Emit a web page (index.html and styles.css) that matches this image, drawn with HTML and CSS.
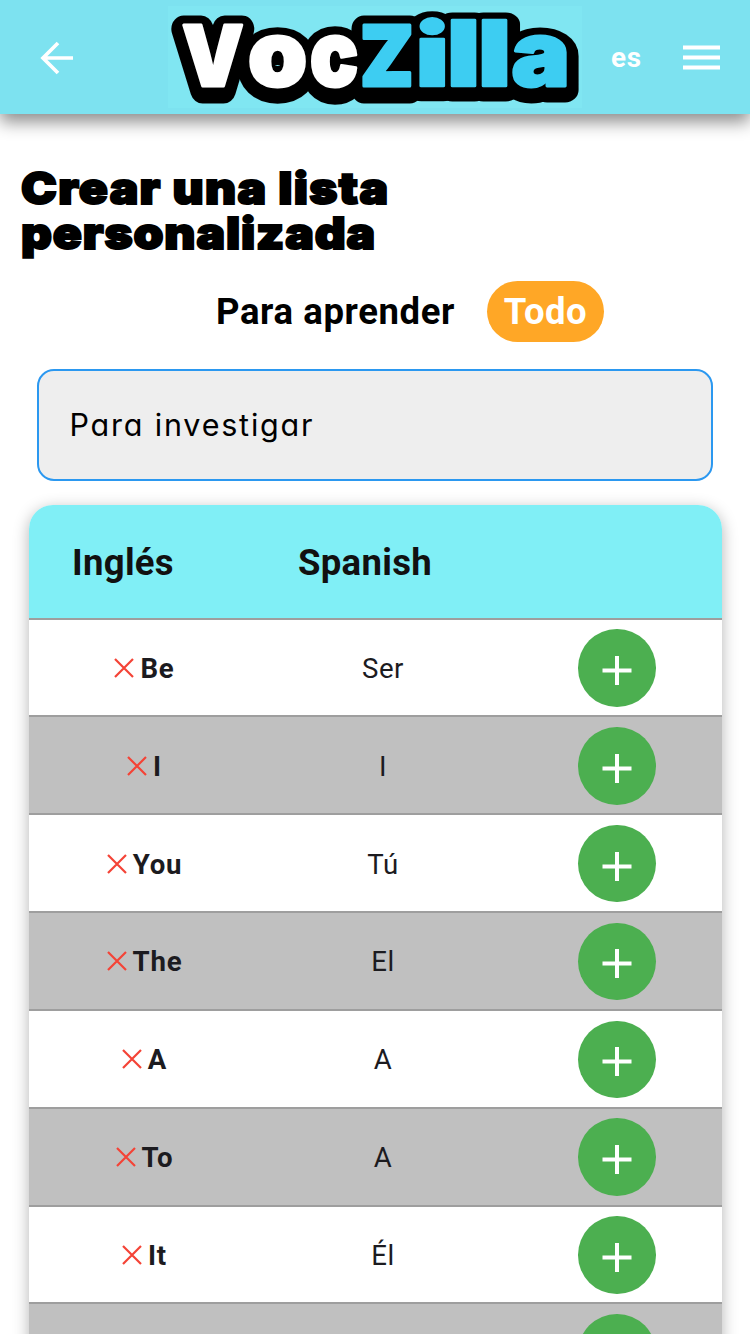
FILE: index.html
```html
<!DOCTYPE html>
<html lang="es">
<head>
<meta charset="utf-8">
<title>VocZilla</title>
<link rel="stylesheet" href="styles.css">
</head>
<body>
<header class="bar">
  <svg class="back" viewBox="0 0 34 34"><path d="M33 17H4M18 2L3 17L18 32"/></svg>
  <svg class="logo" viewBox="0 0 414 102" role="img" aria-label="VocZilla">
    <defs>
      <g id="voc" class="logo-text">
        <text transform="translate(14 80) scale(.9 .98)">V</text>
        <text transform="translate(80 80) scale(1.1 1.05)">o</text>
        <text transform="translate(142 80) scale(.93 1.05)">c</text>
      </g>
      <g id="zilla" class="logo-text">
        <text transform="translate(192 80) scale(.9 .98)">Z</text>
        <text transform="translate(247.500 80) scale(1.32 1.01)">i</text>
        <text transform="translate(278.700 80) scale(1.32 1.05)">l</text>
        <text transform="translate(309.700 80) scale(1.32 1.05)">l</text>
        <text transform="translate(343.500 80) scale(1.14 1.05)">a</text>
      </g>
    </defs>
    <g class="logo-edge">
      <use href="#voc" y="4"/><use href="#zilla" y="4"/>
    </g>
    <use class="logo-white" href="#voc"/>
    <use class="logo-blue" href="#zilla"/>
  </svg>
  <span class="lang">es</span>
  <svg class="menu" viewBox="0 0 37 26"><path d="M0 2.500H37M0 12.500H37M0 22.500H37"/></svg>
</header>
<main>
  <h1 class="title"><span class="line1">Crear una lista</span> <span class="line2">personalizada</span></h1>
  <div class="filter"><span class="filter-label">Para aprender</span><span class="pill">Todo</span></div>
  <div class="search">Para investigar</div>
  <section class="table">
    <div class="head"><span class="h-en">Inglés</span><span class="h-es">Spanish</span></div>
    <div class="rows" id="rows"></div>
  </section>
</main>
<script src="rows.js"></script>
</body>
</html>
```

FILE: rows.js
```js
const words = [['Be', 'Ser'], ['I', 'I'], ['You', 'Tú'], ['The', 'El'], ['A', 'A'], ['To', 'A'], ['It', 'Él'], ['', '']];
document.getElementById('rows').innerHTML = words.map(([en, es]) => `
  <div class="row">
    <div class="en">${en ? '<svg class="cross" viewBox="0 0 20 20"><path d="M1 1L19 19M19 1L1 19"/></svg>' : ''}<b>${en}</b></div>
    <div class="es">${es}</div>
    <div class="add"><svg viewBox="0 0 30 30"><path d="M15 0V29M0.500 14.500H29.500"/></svg></div>
  </div>`).join('');
```

FILE: styles.css
```css
* { box-sizing: border-box; }
body { margin: 0; width: 750px; height: 1334px; overflow: hidden; background: #fff; font-family: Roboto, sans-serif; color: #1c1b1f; }
svg { display: block; fill: none; flex: none; }
.bar { height: 114px; background: #7de2f0; display: flex; align-items: center; padding-left: 40px; box-shadow: 0 8px 16px rgba(0,0,0,.45); }
.back { width: 34px; height: 34px; margin-top: 1px; stroke: #fff; stroke-width: 3.700; }
.logo { width: 414px; height: 102px; margin-left: 94px; background: #80e6f2; overflow: visible; }
.logo-text { font: 900 86px Inter, sans-serif; }
.logo-text text { vector-effect: non-scaling-stroke; }
.logo-edge { fill: #000; stroke: #000; stroke-width: 26px; stroke-linejoin: round; }
.logo-white { fill: #fff; stroke: #fff; stroke-width: 3px; stroke-linejoin: round; }
.logo-blue { fill: #3dcdf2; stroke: #3dcdf2; stroke-width: 3px; stroke-linejoin: round; }
.lang { width: 30px; margin: 1px 0 0 29px; color: #fff; font-size: 27.800px; font-weight: 700; letter-spacing: .8px; }
.menu { width: 37px; height: 26px; margin: 2px 0 0 42px; stroke: #fff; stroke-width: 4; }
.title { width: 500px; margin: 52px 0 0 21px; height: 92px; font: 900 44px/45px Inter, sans-serif; color: #000; -webkit-text-stroke: 2px #000; white-space: nowrap; transform: scaleX(1.09); transform-origin: 0 0; }
.line1, .line2 { display: block; }
.line1 { letter-spacing: 1.200px; }
.line2 { letter-spacing: .800px; }
.filter { display: flex; align-items: center; height: 61px; margin: 23px 0 0 216px; font-size: 36.500px; font-weight: 700; color: #000; }
.filter-label { width: 271px; letter-spacing: .6px; }
.pill { width: 117px; height: 61px; border-radius: 31px; background: #ffa726; color: #fff; line-height: 61px; text-align: center; letter-spacing: .5px; }
.search { width: 676.500px; height: 112px; margin: 27px 0 0 36.500px; border: 2px solid #2b98f0; border-radius: 17px; background: #eee; color: #000; padding-left: 31px; font: 400 30.500px/108px Inter, sans-serif; font-feature-settings: "cv11"; letter-spacing: 1.800px; }
.table { width: 693px; margin: 24px 0 0 28.500px; border-radius: 24px 24px 0 0; box-shadow: 0 4px 16px rgba(0,0,0,.3); overflow: hidden; background: #fff; }
.head { height: 112.500px; background: #80eff6; display: flex; align-items: center; padding: 2px 0 0 43.500px; font-size: 36.500px; font-weight: 700; letter-spacing: .3px; color: #111; }
.h-en { width: 226px; }
.row { height: 97.850px; border-top: 2px solid #9e9e9e; padding-top: 1px; display: grid; grid-template-columns: 232px 245px 216px; align-items: center; font-size: 27.600px; }
.row:nth-child(even) { background: #c0c0c0; }
.en { display: flex; align-items: center; justify-content: center; }
.cross { width: 20px; height: 20px; margin-right: 6px; stroke: #f44336; stroke-width: 2.200; }
.es { padding-top: 1px; text-align: center; letter-spacing: .6px; }
.en b { padding-top: 1px; letter-spacing: .8px; }
.add { width: 77.500px; height: 77.500px; margin-left: 72.500px; border-radius: 50%; background: #4caf50; display: grid; place-items: center; padding-top: 6px; }
.add svg { width: 30px; height: 30px; stroke: #fff; stroke-width: 4; }
```
